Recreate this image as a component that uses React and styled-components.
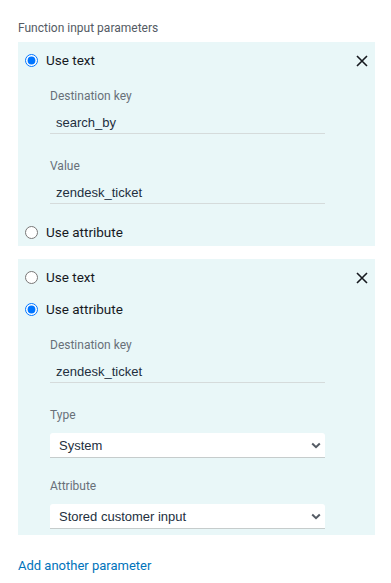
import React from "react";
import styled, { createGlobalStyle } from "styled-components";

const GlobalStyle = createGlobalStyle`
  body {
    margin: 0;
    background: #fff;
    font-family: Roboto, "Liberation Sans", Arial, sans-serif;
  }
`;

const CloseIcon = () => (
  <svg width="12" height="12" viewBox="0 0 12 12">
    <path d="M1 1L11 11M11 1L1 11" stroke="#16191f" strokeWidth="1.6" />
  </svg>
);

const Chevron = () => (
  <svg width="10" height="7" viewBox="0 0 10 7">
    <path d="M1.2 1.5L5 5.2L8.8 1.5" fill="none" stroke="#545b64" strokeWidth="2" />
  </svg>
);

const Field = ({ label, value }) => (
  <FieldWrap>
    <FieldLabel>{label}</FieldLabel>
    <TextInput>{value}</TextInput>
  </FieldWrap>
);

const SelectField = ({ label, value }) => (
  <FieldWrap $select>
    <FieldLabel>{label}</FieldLabel>
    <SelectBox>
      <span>{value}</span>
      <Chevron />
    </SelectBox>
  </FieldWrap>
);

const Radio = ({ checked, children }) => (
  <RadioRow>
    <RadioInput type="radio" checked={checked} readOnly />
    <RadioText>{children}</RadioText>
  </RadioRow>
);

const App = () => {
  return (
    <>
      <GlobalStyle />
      <Page>
        <Heading>Function input parameters</Heading>
        <Panels>
          <Panel>
            <CloseButton><CloseIcon /></CloseButton>
            <Radio checked>Use text</Radio>
            <Fields>
              <Field label="Destination key" value="search_by" />
              <Field label="Value" value="zendesk_ticket" />
            </Fields>
            <Radio>Use attribute</Radio>
          </Panel>
          <Panel>
            <CloseButton><CloseIcon /></CloseButton>
            <Radio>Use text</Radio>
            <Radio checked>Use attribute</Radio>
            <Fields>
              <Field label="Destination key" value="zendesk_ticket" />
              <SelectField label="Type" value="System" />
              <SelectField label="Attribute" value="Stored customer input" />
            </Fields>
          </Panel>
        </Panels>
        <AddLink>Add another parameter</AddLink>
      </Page>
    </>
  );
};

export default App;

const Page = styled.div`
  width: 357px;
  padding: 20px 0 0 18px;
`;

const Heading = styled.div`
  font-size: 12px;
  line-height: 16px;
  color: #545b64;
  margin-bottom: 6px;
`;

const Panels = styled.div`
  display: flex;
  flex-direction: column;
  gap: 13px;
`;

const Panel = styled.div`
  position: relative;
  background: #e9f7f8;
  display: flex;
  flex-direction: column;
  gap: 16px;
  padding: 10px 0 6px;
`;

const CloseButton = styled.div`
  position: absolute;
  top: 10px;
  right: 7px;
  width: 12px;
  height: 12px;
`;

const RadioRow = styled.label`
  display: flex;
  align-items: center;
  height: 16px;
  padding-left: 7px;
`;

const RadioInput = styled.input`
  width: 13px;
  height: 13px;
  margin: 0 8px 0 0;
`;

const RadioText = styled.span`
  font-size: 13.5px;
  color: #16191f;
`;

const Fields = styled.div`
  display: flex;
  flex-direction: column;
  gap: 20px;
  padding: 4px 0 0 32px;
  width: 275px;
`;

const FieldWrap = styled.div`
  display: flex;
  flex-direction: column;
  gap: ${(p) => (p.$select ? "10px" : "6px")};
  padding-bottom: ${(p) => (p.$select ? "0" : "4px")};
`;

const FieldLabel = styled.div`
  font-size: 12px;
  line-height: 16px;
  color: #687078;
`;

const TextInput = styled.div`
  height: 20px;
  padding: 3px 6px 0;
  font-family: "Liberation Sans", Arial, sans-serif;
  font-size: 13px;
  line-height: 20px;
  color: #232f3e;
  border-bottom: 1px solid #d5dbdb;
`;

const SelectBox = styled.div`
  height: 24px;
  display: flex;
  align-items: center;
  justify-content: space-between;
  padding: 0 4px 0 9px;
  background: #fff;
  border-radius: 3px 3px 0 0;
  border-bottom: 1px solid #c6cccc;
  font-family: "Liberation Sans", Arial, sans-serif;
  font-size: 13px;
  color: #232f3e;
`;

const AddLink = styled.div`
  margin-top: 23px;
  font-size: 13px;
  color: #0073bb;
`;
